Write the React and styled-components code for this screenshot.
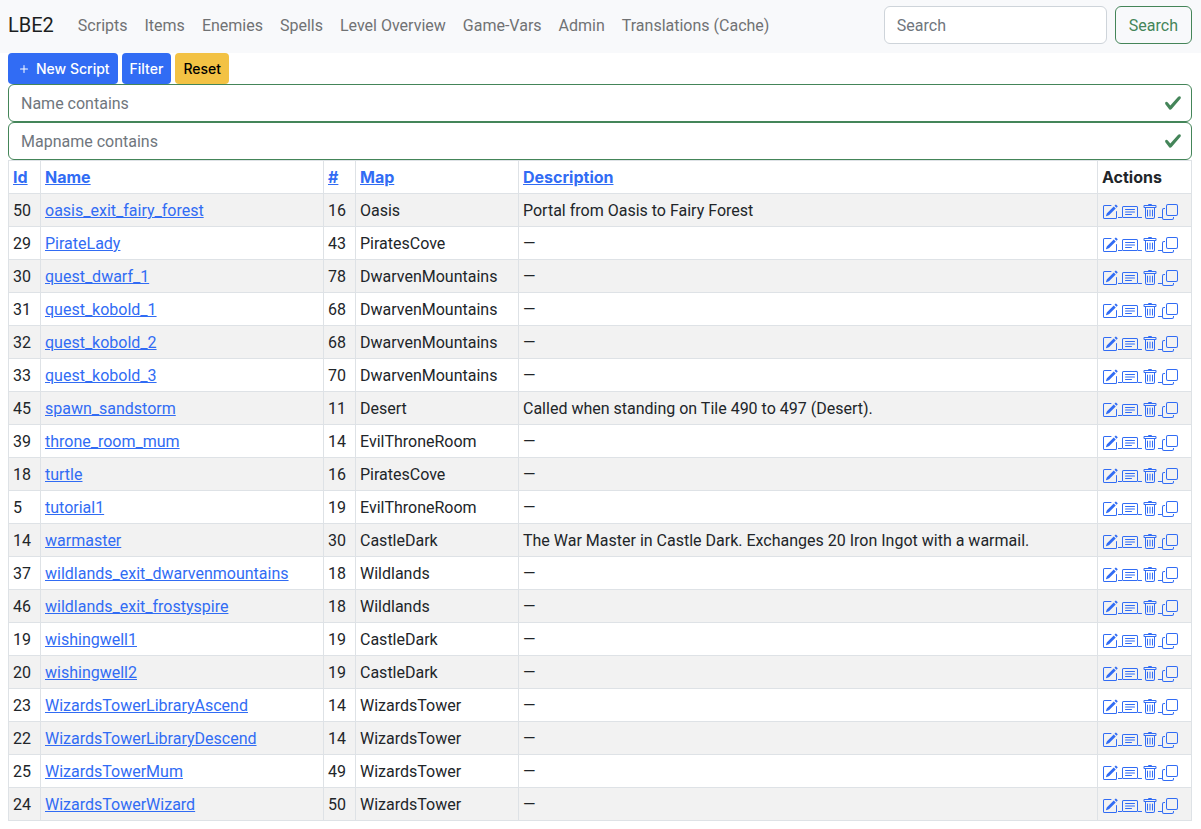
import React from 'react';
import styled, { createGlobalStyle, css } from 'styled-components';
import { BsPencilSquare, BsCardText, BsTrash, BsCopy, BsPlus } from 'react-icons/bs';

const GlobalStyle = createGlobalStyle`
  *, *::before, *::after {
    box-sizing: border-box;
  }
  body {
    margin: 0;
    background-color: #fff;
    color: #212529;
    font-family: Roboto, "Liberation Sans", sans-serif;
    font-size: 16px;
    line-height: 24px;
  }
`;

const Navbar = styled.nav`
  display: flex;
  align-items: center;
  padding: 6px 9px 9px 8px;
  background-color: #f8f9fb;
`;
const Brand = styled.a`
  margin-right: 16px;
  color: #1b1e21;
  font-size: 20px;
  line-height: 30px;
  text-decoration: none;
`;
const NavList = styled.ul`
  display: flex;
  flex: 1;
  gap: 1px;
  margin: 0;
  padding: 0;
  list-style: none;
`;
const NavLink = styled.a`
  display: block;
  padding: 2px 8px 0;
  color: #707274;
  white-space: nowrap;
  text-decoration: none;
`;
const SearchForm = styled.form`
  display: flex;
  gap: 8px;
`;

const field = css`
  height: 38px;
  padding: 6px 12px;
  border: 1px solid #ced4da;
  border-radius: 6px;
  background-color: #fff;
  color: #212529;
  font: inherit;
  &::placeholder {
    color: #6f767d;
    opacity: 1;
  }
`;
const SearchInput = styled.input`
  ${field}
  width: 223px;
`;
const SearchButton = styled.button`
  height: 38px;
  padding: 2px 13px 0;
  border: 1px solid #448559;
  border-radius: 6px;
  background-color: transparent;
  color: #448559;
  font: inherit;
  cursor: pointer;
`;

const Page = styled.main`
  padding: 0 9px 8px 8px;
`;
const Toolbar = styled.div`
  display: flex;
  gap: 4px;
`;
const Button = styled.button`
  display: flex;
  align-items: center;
  gap: 4px;
  height: 31px;
  padding: 0 8px;
  border: 0;
  border-radius: 4px;
  background-color: ${(props) => (props.$warning ? '#f3c244' : '#316cf4')};
  color: ${(props) => (props.$warning ? '#000' : '#fff')};
  font-family: Inter, "Liberation Sans", sans-serif;
  font-size: 14px;
  font-weight: 500;
  cursor: pointer;
`;

const FilterField = styled.label`
  display: grid;
  align-items: center;
  > * {
    grid-area: 1 / 1;
  }
`;
const FilterInput = styled.input`
  ${field}
  width: 100%;
  border-color: #448559;
`;
const Check = styled.svg`
  justify-self: end;
  width: 18px;
  height: 18px;
  margin-right: 10px;
  pointer-events: none;
`;

const Table = styled.table`
  width: 100%;
  border-collapse: collapse;
  table-layout: fixed;
`;
const Col = styled.col`
  width: ${(props) => props.$width || 'auto'};
`;
const Row = styled.tr`
  background-color: ${(props) => (props.$striped ? '#f2f2f2' : '#fff')};
`;
const cell = css`
  border: 1px solid #dee2e6;
  text-align: left;
  white-space: nowrap;
`;
const HeadCell = styled.th`
  ${cell}
  padding: 4px;
  font-family: Inter, "Liberation Sans", sans-serif;
  font-weight: 700;
`;
const Cell = styled.td`
  ${cell}
  padding: 5px 4px 3px;
`;
const Link = styled.a`
  color: #316cf4;
  text-decoration: underline;
  svg {
    vertical-align: -4px;
  }
`;

const navItems = [
  'Scripts', 'Items', 'Enemies', 'Spells', 'Level Overview', 'Game-Vars', 'Admin', 'Translations (Cache)',
];

const columns = ['Id', 'Name', '#', 'Map', 'Description'];

const actions = [
  { label: 'Edit', Icon: BsPencilSquare },
  { label: 'Show text', Icon: BsCardText },
  { label: 'Delete', Icon: BsTrash },
  { label: 'Copy', Icon: BsCopy },
];

const scripts = [
  [50, 'oasis_exit_fairy_forest', 16, 'Oasis', 'Portal from Oasis to Fairy Forest'],
  [29, 'PirateLady', 43, 'PiratesCove'],
  [30, 'quest_dwarf_1', 78, 'DwarvenMountains'],
  [31, 'quest_kobold_1', 68, 'DwarvenMountains'],
  [32, 'quest_kobold_2', 68, 'DwarvenMountains'],
  [33, 'quest_kobold_3', 70, 'DwarvenMountains'],
  [45, 'spawn_sandstorm', 11, 'Desert', 'Called when standing on Tile 490 to 497 (Desert).'],
  [39, 'throne_room_mum', 14, 'EvilThroneRoom'],
  [18, 'turtle', 16, 'PiratesCove'],
  [5, 'tutorial1', 19, 'EvilThroneRoom'],
  [14, 'warmaster', 30, 'CastleDark', 'The War Master in Castle Dark. Exchanges 20 Iron Ingot with a warmail.'],
  [37, 'wildlands_exit_dwarvenmountains', 18, 'Wildlands'],
  [46, 'wildlands_exit_frostyspire', 18, 'Wildlands'],
  [19, 'wishingwell1', 19, 'CastleDark'],
  [20, 'wishingwell2', 19, 'CastleDark'],
  [23, 'WizardsTowerLibraryAscend', 14, 'WizardsTower'],
  [22, 'WizardsTowerLibraryDescend', 14, 'WizardsTower'],
  [25, 'WizardsTowerMum', 49, 'WizardsTower'],
  [24, 'WizardsTowerWizard', 50, 'WizardsTower'],
];

const ValidFilter = ({ label }) => (
  <FilterField>
    <FilterInput type="text" placeholder={label} aria-label={label} />
    <Check viewBox="0 0 8 8" aria-hidden="true">
      <path
        fill="#448559"
        d="M2.3 6.73L.6 4.53c-.4-1.04.46-1.4 1.1-.8l1.1 1.4 3.4-3.8c.6-.63 1.6-.27 1.2.7l-4 4.6c-.43.5-.8.4-1.1.1z"
      />
    </Check>
  </FilterField>
);

const App = () => {
  return (
    <>
      <GlobalStyle />
      <Navbar>
        <Brand href="#">LBE2</Brand>
        <NavList>
          {navItems.map((item) => (
            <li key={item}><NavLink href="#">{item}</NavLink></li>
          ))}
        </NavList>
        <SearchForm onSubmit={(e) => e.preventDefault()}>
          <SearchInput type="search" placeholder="Search" aria-label="Search" />
          <SearchButton type="submit">Search</SearchButton>
        </SearchForm>
      </Navbar>
      <Page>
        <Toolbar>
          <Button type="button"><BsPlus size={16} /> New Script</Button>
          <Button type="button">Filter</Button>
          <Button type="button" $warning>Reset</Button>
        </Toolbar>
        <ValidFilter label="Name contains" />
        <ValidFilter label="Mapname contains" />
        <Table>
          <colgroup>
            <Col $width="32px" />
            <Col $width="283px" />
            <Col $width="32px" />
            <Col $width="163px" />
            <Col />
            <Col $width="94px" />
          </colgroup>
          <thead>
            <Row>
              {columns.map((name) => (
                <HeadCell key={name} scope="col"><Link href="#">{name}</Link></HeadCell>
              ))}
              <HeadCell scope="col">Actions</HeadCell>
            </Row>
          </thead>
          <tbody>
            {scripts.map(([id, name, count, map, description], index) => (
              <Row key={id} $striped={index % 2 === 0}>
                <Cell>{id}</Cell>
                <Cell><Link href="#">{name}</Link></Cell>
                <Cell>{count}</Cell>
                <Cell>{map}</Cell>
                <Cell>{description || '—'}</Cell>
                <Cell>
                  {actions.map(({ label, Icon }) => (
                    <Link key={label} href="#" aria-label={label}><Icon size={16} />{' '}</Link>
                  ))}
                </Cell>
              </Row>
            ))}
          </tbody>
        </Table>
      </Page>
    </>
  );
};

export default App;
